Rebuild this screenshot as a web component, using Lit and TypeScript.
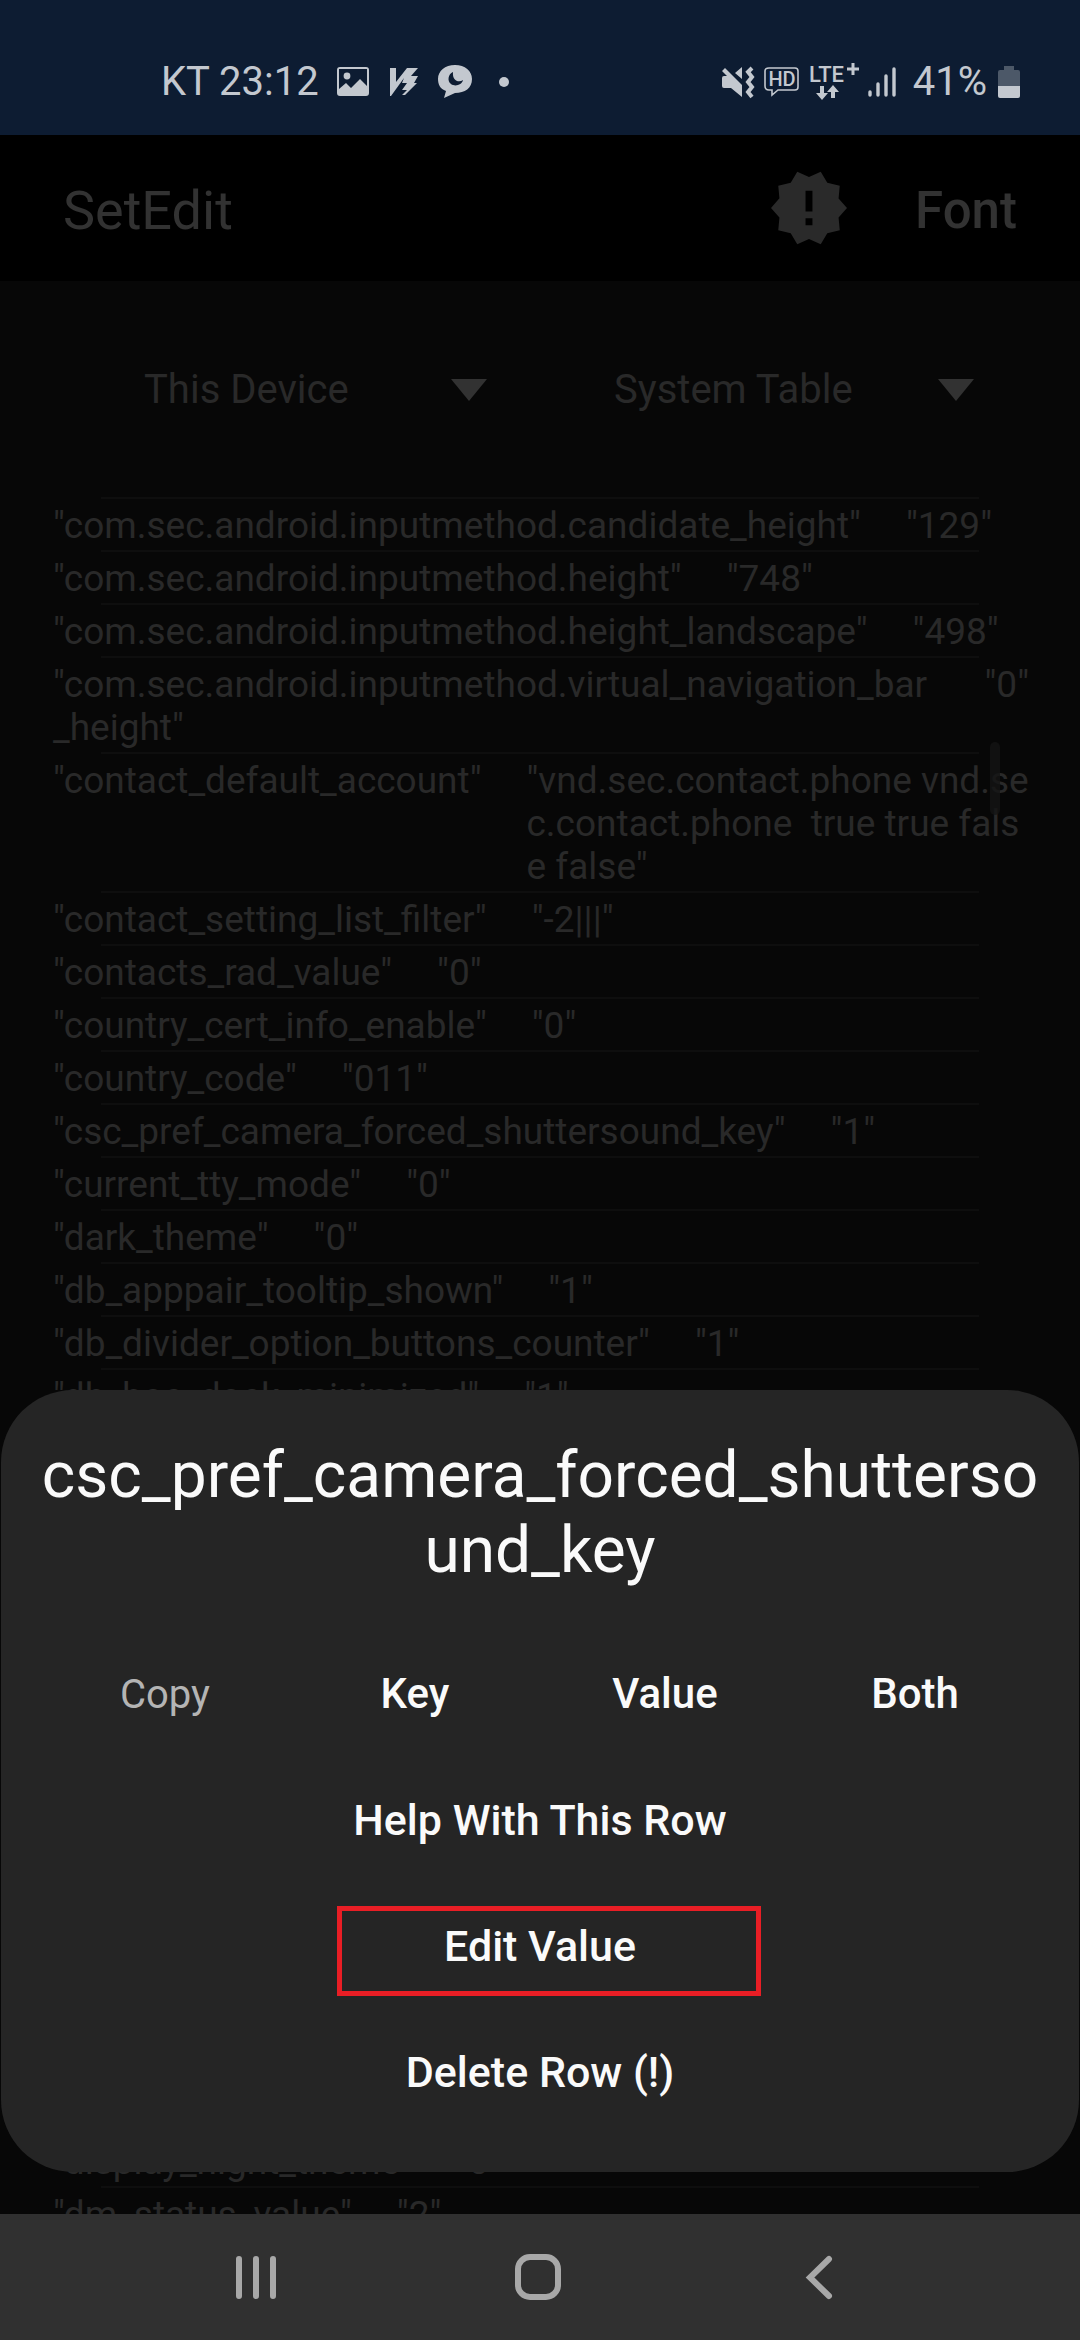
import { LitElement, html, css } from "lit";
import { customElement } from "lit/decorators.js";

interface SettingRow {
  key: string;
  value: string;
}

const ROWS: SettingRow[] = [
  { key: "com.sec.android.inputmethod.candidate_height", value: "129" },
  { key: "com.sec.android.inputmethod.height", value: "748" },
  { key: "com.sec.android.inputmethod.height_landscape", value: "498" },
  { key: "com.sec.android.inputmethod.virtual_navigation_bar_height", value: "0" },
  {
    key: "contact_default_account",
    value: "vnd.sec.contact.phone vnd.sec.contact.phone  true true false false",
  },
  { key: "contact_setting_list_filter", value: "-2|||" },
  { key: "contacts_rad_value", value: "0" },
  { key: "country_cert_info_enable", value: "0" },
  { key: "country_code", value: "011" },
  { key: "csc_pref_camera_forced_shuttersound_key", value: "1" },
  { key: "current_tty_mode", value: "0" },
  { key: "dark_theme", value: "0" },
  { key: "db_apppair_tooltip_shown", value: "1" },
  { key: "db_divider_option_buttons_counter", value: "1" },
  { key: "db_hoc_dock_minimized", value: "1" },
];

const TAIL_ROWS: SettingRow[] = [
  { key: "display_night_theme", value: "0" },
  { key: "dm_status_value", value: "2" },
];

/* Rows that are scrolled under the sheet are not rendered; their space is kept. */
const LINE = 43;
const ROW_PADDING = 10;
const SKIPPED_ROWS = 11;
const SKIPPED_EXTRA_LINES = 3;
const skippedHeight = SKIPPED_ROWS * (LINE + ROW_PADDING) + SKIPPED_EXTRA_LINES * LINE;

@customElement("status-bar")
export class StatusBar extends LitElement {
  static styles = css`
    :host {
      display: flex;
      flex: none;
      align-items: center;
      justify-content: space-between;
      box-sizing: border-box;
      height: 135px;
      padding: 29px 60px 0 161px;
      background: #0d1c32;
      color: #c3c8cf;
      font-size: 40px;
      line-height: 48px;
    }
    .group {
      display: flex;
      align-items: center;
    }
    .left {
      gap: 18px;
    }
    .right {
      gap: 9px;
    }
    svg {
      display: block;
      fill: currentColor;
    }
    .hd {
      font-size: 20px;
      font-weight: 500;
    }
    .lte {
      font-size: 22px;
      font-weight: 500;
    }
    .level {
      margin: 0 2px 0 8px;
    }
    .dot {
      width: 10px;
      height: 10px;
      margin-left: 8px;
      border-radius: 50%;
      background: currentColor;
    }
  `;

  render() {
    return html`
      <div class="group left">
        <span>KT 23:12</span>
        <svg width="32" height="34" viewBox="0 0 32 34" aria-hidden="true">
          <path
            fill-rule="evenodd"
            d="M3 2H29Q32 2 32 5V28Q32 31 29 31H3Q0 31 0 28V5Q0 2 3 2ZM2 4V24L9 18L14 23L23 14L30 21V4Z"
          />
          <circle cx="10" cy="11" r="3.4" />
        </svg>
        <svg width="32" height="34" viewBox="0 0 32 34" aria-hidden="true">
          <path d="M3 3H9V17L20 3H31L24 11H31L27 18H30L18 30H15L20 25H15L20 18H15L17 13L4 31H3Z" />
        </svg>
        <svg width="36" height="36" viewBox="0 0 36 36" aria-hidden="true">
          <path
            fill-rule="evenodd"
            d="M18 1C28 1 35 7 35 15C35 24 28 29 18 29L7 34L9 27C3 25 1 20 1 15C1 7 8 1 18 1ZM16 8C11 10 10 17 14 20C18 23 25 21 26 16C22 19 15 17 16 8Z"
          />
        </svg>
        <span class="dot"></span>
      </div>
      <div class="group right">
        <svg width="34" height="34" viewBox="0 0 34 34" aria-hidden="true">
          <path d="M1 13Q1 11 3 11H6L1 6L4 3L21 20V32L10 23H3Q1 23 1 21ZM14 8L21 2V14Z" />
          <path
            d="M31 3L27 7L31 12L27 17L31 22L27 27L31 32"
            fill="none"
            stroke="currentColor"
            stroke-width="4"
          />
        </svg>
        <svg width="36" height="32" viewBox="0 0 36 32" aria-hidden="true">
          <path
            d="M5 2H31Q34 2 34 5V21Q34 24 31 24H14L8 29V24H5Q1 24 1 20V5Q1 2 5 2Z"
            fill="none"
            stroke="currentColor"
            stroke-width="1.6"
          />
          <text class="hd" x="18" y="20" text-anchor="middle">HD</text>
        </svg>
        <svg width="50" height="40" viewBox="0 0 50 40" aria-hidden="true">
          <text class="lte" x="0" y="20">LTE</text>
          <path d="M44 1V13M38 7H50" fill="none" stroke="currentColor" stroke-width="3" />
          <path d="M11 24H15V31H19L13 38L7 31H11ZM22 36V30H18L24 23L30 30H26V36Z" />
        </svg>
        <svg width="28" height="32" viewBox="0 0 28 32" aria-hidden="true">
          <path
            d="M2 26V29M10 18V29M18 10V29M26 3V29"
            stroke="currentColor"
            stroke-width="3.4"
            stroke-linecap="round"
          />
        </svg>
        <span class="level">41%</span>
        <svg width="22" height="34" viewBox="0 0 22 34" aria-hidden="true">
          <path d="M6 1H16V5H20Q22 5 22 7V21H0V7Q0 5 2 5H6Z" opacity="0.35" />
          <path d="M0 21H22V31Q22 33 20 33H2Q0 33 0 31Z" />
        </svg>
      </div>
    `;
  }
}

@customElement("settings-list")
export class SettingsList extends LitElement {
  static styles = css`
    :host {
      display: block;
      flex: 1;
      min-height: 0;
      overflow: hidden;
      color: #292929;
      font-size: 37px;
      line-height: 43px;
    }
    ul {
      margin: 0;
      padding: 0;
      list-style: none;
    }
    .row {
      padding: 0 51px 0 53px;
    }
    .row::before {
      content: "";
      display: block;
      height: 2px;
      margin: 0 50px 0 48px;
      background: #0e0e0e;
    }
    .cells {
      display: flex;
      gap: 45px;
      padding: 5px 0 3px;
      white-space: pre-wrap;
      word-break: break-all;
    }
    .fixed {
      flex: none;
    }
  `;

  private row(r: SettingRow) {
    const keyLonger = r.key.length >= r.value.length;
    return html`<li class="row">
      <div class="cells"><span class=${keyLonger ? "" : "fixed"}>${`"${r.key}"`}</span><span class=${keyLonger ? "fixed" : ""}>${`"${r.value}"`}</span></div>
    </li>`;
  }

  render() {
    return html`<ul>
      ${ROWS.map((r) => this.row(r))}
      <li style="height:${skippedHeight}px" aria-hidden="true"></li>
      ${TAIL_ROWS.map((r) => this.row(r))}
    </ul>`;
  }
}

@customElement("row-sheet")
export class RowSheet extends LitElement {
  static styles = css`
    :host {
      display: block;
      box-sizing: border-box;
      padding: 48px 39px 37px;
      border-radius: 72px;
      background: #252525;
      color: #fafafa;
    }
    h2 {
      margin: 0 0 43px;
      font-size: 64px;
      font-weight: 400;
      line-height: 75px;
      text-align: center;
      word-break: break-all;
    }
    .copy {
      display: grid;
      grid-template-columns: repeat(4, 1fr);
      align-items: center;
      text-align: center;
      font-size: 40px;
    }
    .label {
      color: #b4b4b4;
    }
    button {
      display: block;
      width: 100%;
      height: 126px;
      margin: 0;
      padding: 0;
      border: 0;
      background: none;
      color: inherit;
      font: 500 43px/50px Roboto, sans-serif;
    }
    .copy button {
      font-size: 42px;
    }
    .marked {
      position: relative;
    }
    .frame {
      position: absolute;
      inset: 23px 279px 13px 297px;
      border: 5px solid #e91e25;
      pointer-events: none;
    }
  `;

  render() {
    return html`
      <h2>csc_pref_camera_forced_shuttersound_key</h2>
      <div class="copy" role="group" aria-labelledby="copy-label">
        <span class="label" id="copy-label">Copy</span>
        <button>Key</button>
        <button>Value</button>
        <button>Both</button>
      </div>
      <button>Help With This Row</button>
      <div class="marked">
        <button>Edit Value</button>
        <span class="frame"></span>
      </div>
      <button>Delete Row (!)</button>
    `;
  }
}

@customElement("app-root")
export class AppRoot extends LitElement {
  static styles = css`
    :host {
      position: relative;
      display: flex;
      flex-direction: column;
      height: 100vh;
      overflow: hidden;
      background: #070707;
      font-family: Roboto, sans-serif;
    }
    header {
      display: flex;
      flex: none;
      align-items: center;
      box-sizing: border-box;
      height: 146px;
      padding: 0 63px;
      background: #000;
      color: #323232;
    }
    h1 {
      flex: 1;
      margin: 0;
      padding-top: 6px;
      font-size: 54px;
      font-weight: 400;
      line-height: 64px;
    }
    button {
      display: block;
      margin: 0;
      padding: 0;
      border: 0;
      background: none;
      color: inherit;
      font: inherit;
    }
    .alert {
      margin-right: 68px;
      color: #2a2a2a;
    }
    .font {
      padding-top: 6px;
      font-size: 51px;
      font-weight: 500;
      line-height: 60px;
    }
    svg {
      display: block;
    }
    .pickers {
      display: grid;
      grid-template-columns: 470px 1fr;
      flex: none;
      padding: 78px 106px 76px 144px;
      color: #292929;
    }
    .picker {
      display: flex;
      align-items: center;
    }
    select {
      flex: 1;
      min-width: 0;
      height: 62px;
      margin: 0;
      padding: 0;
      border: 0;
      appearance: none;
      background: none;
      color: inherit;
      font: 400 40px/62px Roboto, sans-serif;
    }
    .first {
      padding-right: 127px;
    }
    .body {
      position: relative;
      display: flex;
      flex: 1;
      flex-direction: column;
      min-height: 0;
    }
    .thumb {
      position: absolute;
      top: 461px;
      right: 80px;
      width: 10px;
      height: 73px;
      border-radius: 5px;
      background: #141414;
      opacity: 0.8;
    }
    row-sheet {
      position: absolute;
      right: 1px;
      bottom: 42px;
      left: 1px;
    }
    nav {
      display: grid;
      grid-template-columns: repeat(3, 1fr);
      flex: none;
      align-items: center;
      justify-items: center;
      box-sizing: border-box;
      height: 126px;
      padding: 0 119px 0 115px;
      background: #303030;
      color: #a8a8a8;
    }
    nav svg {
      fill: none;
      stroke: currentColor;
      stroke-width: 6;
      stroke-linecap: round;
    }
  `;

  private arrow() {
    return html`<svg width="36" height="22" viewBox="0 0 36 22" aria-hidden="true">
      <path d="M0 0H36L18 22Z" fill="#323232" />
    </svg>`;
  }

  render() {
    return html`
      <status-bar></status-bar>
      <header>
        <h1>SetEdit</h1>
        <button class="alert" aria-label="Notice">
          <svg width="76" height="74" viewBox="1 1.400 22 21.200" aria-hidden="true">
            <path
              fill="currentColor"
              d="M23 12l-2.440-2.780.340-3.680-3.610-.820-1.890-3.180L12 3 8.600 1.540 6.710 4.720l-3.610.810.340 3.680L1 12l2.440 2.780-.340 3.690 3.610.820 1.890 3.180L12 21l3.400 1.460 1.890-3.180 3.610-.820-.340-3.680L23 12zm-10 5h-2v-2h2v2zm0-4h-2V7h2v6z"
            />
          </svg>
        </button>
        <button class="font">Font</button>
      </header>
      <div class="body">
        <div class="pickers">
          <div class="picker first">
            <select aria-label="Device"><option>This Device</option></select>
            ${this.arrow()}
          </div>
          <div class="picker">
            <select aria-label="Table"><option>System Table</option></select>
            ${this.arrow()}
          </div>
        </div>
        <settings-list></settings-list>
        <div class="thumb"></div>
        <row-sheet role="dialog" aria-label="Row actions"></row-sheet>
      </div>
      <nav>
        <button aria-label="Recents">
          <svg width="50" height="50" viewBox="0 0 50 50">
            <path d="M8 7V44M25 7V44M42 7V44" />
          </svg>
        </button>
        <button aria-label="Home">
          <svg width="50" height="50" viewBox="0 0 50 50">
            <rect x="5" y="5" width="40" height="40" rx="12" />
          </svg>
        </button>
        <button aria-label="Back">
          <svg width="40" height="50" viewBox="0 0 40 50">
            <path d="M29 7L10 25.500L29 44" />
          </svg>
        </button>
      </nav>
    `;
  }
}
